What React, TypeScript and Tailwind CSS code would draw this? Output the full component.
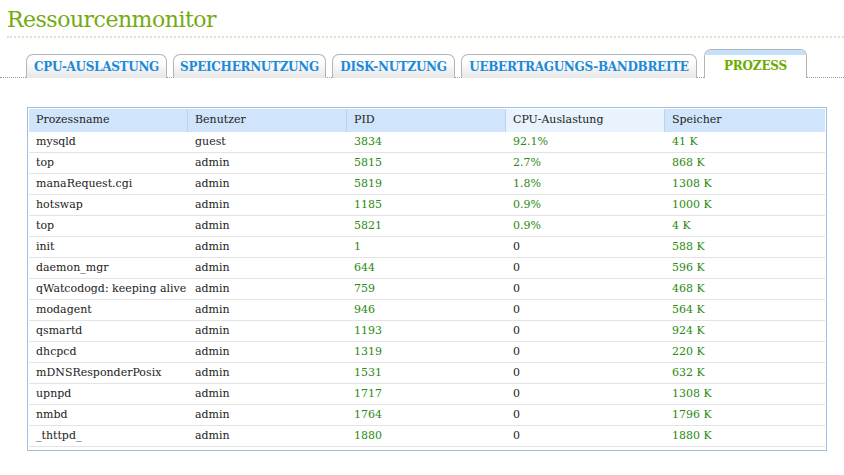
import React from "react";

const rows: [string, string, string, string, string][] = [
  ["mysqld", "guest", "3834", "92.1%", "41 K"],
  ["top", "admin", "5815", "2.7%", "868 K"],
  ["manaRequest.cgi", "admin", "5819", "1.8%", "1308 K"],
  ["hotswap", "admin", "1185", "0.9%", "1000 K"],
  ["top", "admin", "5821", "0.9%", "4 K"],
  ["init", "admin", "1", "0", "588 K"],
  ["daemon_mgr", "admin", "644", "0", "596 K"],
  ["qWatcodogd: keeping alive", "admin", "759", "0", "468 K"],
  ["modagent", "admin", "946", "0", "564 K"],
  ["qsmartd", "admin", "1193", "0", "924 K"],
  ["dhcpcd", "admin", "1319", "0", "220 K"],
  ["mDNSResponderPosix", "admin", "1531", "0", "632 K"],
  ["upnpd", "admin", "1717", "0", "1308 K"],
  ["nmbd", "admin", "1764", "0", "1796 K"],
  ["_thttpd_", "admin", "1880", "0", "1880 K"],
];

const tabs = [
  { label: "CPU-AUSLASTUNG", w: "w-[141px]" },
  { label: "SPEICHERNUTZUNG", w: "w-[153px]" },
  { label: "DISK-NUTZUNG", w: "w-[123px]" },
  { label: "UEBERTRAGUNGS-BANDBREITE", w: "w-[236px]" },
];

export default function App() {
  return (
    <div className="w-[844px] h-[475px] bg-white overflow-hidden" style={{ fontFamily: '"DejaVu Serif", Georgia, serif' }}>
      <div className="pl-[7px] pt-[6px] h-[33px] text-[22px] leading-[27px] text-[#74aa10]">
        <span className="tracking-[-0.5px]">Ressourcenmonitor</span>
      </div>
      <div className="ml-[7px] h-[2px] mt-[3px] border-t-2 border-dotted border-[#e4e0cc]" />
      <div className="mt-[11px] h-[29px] flex items-end pl-[5px] border-b border-dotted border-[#999999]">
        <div className="flex items-end gap-[6px] pl-[21px] -mb-px">
          {tabs.map((t) => (
            <div
              key={t.label}
              className={`${t.w} h-[24px] rounded-t-[7px] border border-b-0 border-[#b4b4b4] bg-gradient-to-b from-white from-30% to-[#e6e6e6] flex items-center justify-center text-[12px] font-bold text-[#1c8ad9] tracking-[-0.3px]`}
            >
              {t.label}
            </div>
          ))}
          <div className="w-[103px] ml-[1px] h-[29px] rounded-t-[7px] border border-b-0 border-[#b4b4b4] bg-white flex flex-col overflow-hidden">
            <div className="h-[5px] bg-[#c4e1fb]" />
            <div className="flex-1 flex items-center justify-center text-[12px] font-bold text-[#6aab00] pb-[1px] bg-white tracking-[-0.2px]">PROZESS</div>
          </div>
        </div>
      </div>
      <div className="ml-[27px] mt-[29px] w-[800px] h-[344px] border border-[#a4bee0] p-px">
        <div className="flex h-[23px] text-[11px] text-[#222]">
          {["Prozessname", "Benutzer", "PID", "CPU-Auslastung", "Speicher"].map((h, i) => (
            <div
              key={h}
              className={`${i === 4 ? "flex-1" : "w-[159px]"} ${i === 3 ? "bg-[#e8f3fd]" : "bg-[#d0e5fb]"} ${i < 4 ? "border-r border-[#bcd3ee]" : ""} flex items-center pl-[7px]`}
            >
              {h}
            </div>
          ))}
        </div>
        {rows.map((r, ri) => (
          <div key={ri} className="flex h-[21px] text-[11px] border-b border-[#e4e4e4] items-center">
            <div className="w-[159px] pl-[7px] text-[#222] whitespace-nowrap overflow-hidden">{r[0]}</div>
            <div className="w-[159px] pl-[7px] text-[#222]">{r[1]}</div>
            <div className="w-[159px] pl-[7px] text-[#2a8a12]">{r[2]}</div>
            <div className={`w-[159px] pl-[7px] ${r[3] === "0" ? "text-[#222]" : "text-[#2a8a12]"}`}>{r[3]}</div>
            <div className="flex-1 pl-[7px] text-[#2a8a12]">{r[4]}</div>
          </div>
        ))}
      </div>
    </div>
  );
}
